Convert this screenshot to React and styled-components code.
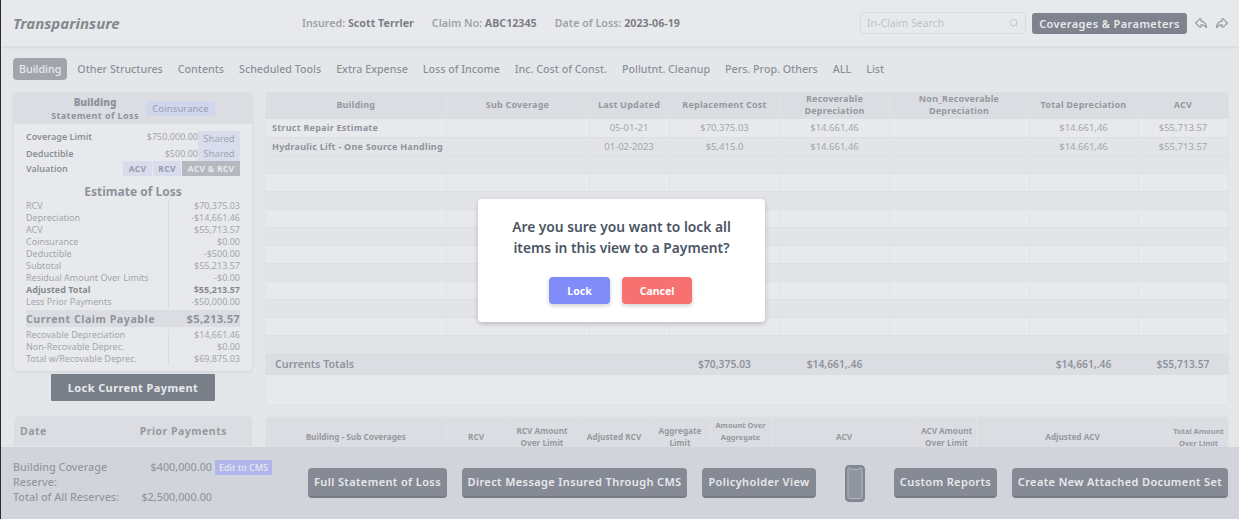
import styled, { createGlobalStyle } from "styled-components";
import { Search } from "lucide-react";
import { TiArrowBackOutline, TiArrowForwardOutline } from "react-icons/ti";

const GlobalStyle = createGlobalStyle`
	html, body {
		margin: 0;
		height: 100%;
		overflow: hidden;
		background: #2b2b2b;
	}
	* {
		box-sizing: border-box;
	}
	#root {
		height: 100%;
		padding-left: 1px;
		font-family: "Noto Sans", "Open Sans", sans-serif;
	}
`;

const Page = styled.div`
	position: relative;
	height: 519px;
	display: flex;
	flex-direction: column;
	background: #f7fbfb;
	overflow: hidden;
`;

const Header = styled.header`
	flex: none;
	height: 46px;
	display: flex;
	align-items: center;
	padding: 0 9px 0 12px;
	background: #ffffff;
	box-shadow: 0 1px 4px rgba(0, 0, 0, 0.14);
`;

const Logo = styled.div`
	width: 289px;
	font-size: 15px;
	font-weight: 700;
	font-style: italic;
	color: #343a44;
`;

const ClaimInfo = styled.div`
	flex: 1;
	display: flex;
	gap: 18px;
	font-size: 10.7px;
	font-weight: 600;
	color: #676d77;

	b {
		font-weight: 700;
		color: #1f2732;
	}
`;

const SearchBox = styled.div`
	width: 166px;
	height: 22px;
	display: flex;
	align-items: center;
	justify-content: space-between;
	padding: 0 6px;
	margin-right: 6px;
	border: 1px solid #dfe3e8;
	border-radius: 4px;
	font-size: 10.5px;
	color: #a8adb5;
`;

const DarkButton = styled.button`
	border: none;
	border-radius: 3px;
	background: #2d3343;
	color: #ffffff;
	font-family: inherit;
	font-size: 11px;
	font-weight: 600;
	letter-spacing: 0.4px;
	height: 21px;
	width: 155px;
	padding: 0;
`;

const HeaderIcons = styled.div`
	display: flex;
	gap: 5px;
	margin-left: 6px;
	color: #666c76;
	font-size: 16px;

	svg {
		display: block;
	}
`;

const Tabs = styled.nav`
	flex: none;
	display: flex;
	align-items: center;
	gap: 5px;
	height: 24px;
	margin: 11px 0 11px 12px;
`;

const Tab = styled.div`
	padding: 0 ${({ $active }) => ($active ? "6px" : "5px")};
	height: 22px;
	line-height: 22px;
	border-radius: 4px;
	font-size: 10.7px;
	font-weight: 500;
	color: ${({ $active }) => ($active ? "#ffffff" : "#434b57")};
	background: ${({ $active }) => ($active ? "#6f7783" : "transparent")};
`;

const Content = styled.main`
	flex: 1;
	min-height: 0;
	overflow: hidden;
	display: grid;
	grid-template-columns: 238px 962px;
	column-gap: 14px;
	padding: 0 0 0 13px;
	align-content: start;
`;

const Sidebar = styled.aside`
	display: flex;
	flex-direction: column;
	align-items: center;
`;

const Card = styled.section`
	width: 100%;
	height: 279px;
	background: #ffffff;
	border-radius: 5px;
	box-shadow: 0 1px 4px rgba(0, 0, 0, 0.16);
	overflow: hidden;
`;

const CardHeader = styled.div`
	height: 32px;
	display: flex;
	align-items: center;
	gap: 7px;
	padding-left: 37px;
	background: #e5e7eb;
`;

const CardTitle = styled.div`
	width: 88px;
	text-align: center;
	font-size: 9px;
	font-weight: 700;
	letter-spacing: 0.4px;
	line-height: 12px;
	color: #4a515b;
	white-space: nowrap;

	strong {
		display: block;
		font-size: 10px;
		letter-spacing: 0;
		line-height: 15px;
	}
`;

const Chip = styled.span`
	display: inline-block;
	width: 69px;
	height: 15px;
	line-height: 15px;
	text-align: center;
	border-radius: 2px;
	background: #cfd8ff;
	color: #5a6290;
	font-size: 9.5px;
	letter-spacing: 0.1px;
`;

const CardBody = styled.div`
	padding: 6px 12px 0 12px;
`;

const LimitRow = styled.div`
	height: ${({ $h }) => $h}px;
	display: flex;
	align-items: center;
	font-size: 9px;
	font-weight: 600;
	color: #3f4650;
`;

const LimitLabel = styled.span`
	flex: 1;
	padding-bottom: ${({ $up }) => ($up ? "3px" : "0")};
`;

const LimitValue = styled.span`
	font-weight: 400;
	color: #6f757d;
	font-size: 9px;
	padding-bottom: ${({ $up }) => ($up ? "3px" : "0")};
`;

const SharedChip = styled.span`
	width: 42px;
	height: 15px;
	line-height: 15px;
	text-align: center;
	background: #dfe4ff;
	color: #6f7590;
	font-size: 9.5px;
	font-weight: 400;
`;

const Segment = styled.span`
	width: ${({ $w }) => $w}px;
	height: 15px;
	line-height: 15px;
	text-align: center;
	margin-left: ${({ $first }) => ($first ? "0" : "1px")};
	background: ${({ $active }) => ($active ? "#999da3" : "#dfe4ff")};
	color: ${({ $active }) => ($active ? "#ffffff" : "#5c637c")};
	font-size: 8.5px;
	font-weight: 700;
	letter-spacing: 0.3px;
`;

const EstimateTitle = styled.div`
	margin-top: 7px;
	text-align: center;
	font-size: 12px;
	font-weight: 700;
	line-height: 17px;
	color: #4a515b;
`;

const StatementRow = styled.div`
	display: grid;
	grid-template-columns: 143px 1fr;
	height: 12px;
	line-height: 12px;
	font-size: 9px;
	color: ${({ $bold }) => ($bold ? "#393f45" : "#6f757d")};
	font-weight: ${({ $bold }) => ($bold ? 700 : 400)};

	span:first-child {
		border-right: 1px solid #e2e4e8;
	}
	span:last-child {
		text-align: right;
	}
`;

const PayableRow = styled.div`
	display: grid;
	grid-template-columns: 143px 1fr;
	height: 17px;
	line-height: 18px;
	margin: 2px 0;
	background: #e5e7eb;
	font-size: 10.7px;
	font-weight: 700;
	letter-spacing: 0.5px;
	color: #4a515b;
	white-space: nowrap;

	span:last-child {
		text-align: right;
		font-size: 11.3px;
		letter-spacing: 0.2px;
	}
`;

const LockButton = styled.button`
	width: 164px;
	height: 27px;
	margin-top: 3px;
	border: none;
	border-radius: 1px;
	background: #212b39;
	color: #ffffff;
	font-family: inherit;
	font-size: 11px;
	font-weight: 700;
	letter-spacing: 0.4px;
	padding: 0;
`;

const PriorHeader = styled.div`
	width: 100%;
	height: 30px;
	margin-top: 15px;
	display: flex;
	align-items: center;
	justify-content: space-between;
	padding: 0 25px 0 6px;
	border-radius: 5px 5px 0 0;
	background: #e5e7eb;
	font-size: 10.5px;
	font-weight: 700;
	letter-spacing: 0.5px;
	color: #575d65;
`;

const TablesColumn = styled.div`
	display: flex;
	flex-direction: column;
	gap: 12px;
`;

const TableCard = styled.div`
	height: ${({ $h }) => $h}px;
	flex: none;
	background: #ffffff;
	border-radius: 3px;
	box-shadow: 0 0 2px rgba(0, 0, 0, 0.12);
	overflow: hidden;
`;

const Table = styled.table`
	width: 100%;
	table-layout: fixed;
	border-collapse: collapse;
`;

const HeadCell = styled.th`
	height: ${({ $h }) => $h}px;
	padding: 0 0 ${({ $lift }) => ($lift ? "13px" : "1px")};
	background: #e5e7eb;
	border-right: 1px solid #f0f1f3;
	color: #575d65;
	font-size: ${({ $size }) => $size}px;
	line-height: 12px;
	font-weight: 700;
	letter-spacing: ${({ $spacing }) => $spacing}px;
`;

const Row = styled.tr`
	height: 18px;
	background: ${({ $alt }) => ($alt ? "#f3f5f7" : "#ffffff")};
	border-bottom: 1px solid #e8eaed;
`;

const Cell = styled.td`
	padding: 0;
	border-right: 1px solid #eef0f2;
	text-align: center;
	font-size: 9.5px;
	color: #6f757d;
`;

const NameCell = styled(Cell)`
	padding-left: 6px;
	text-align: left;
	font-size: 9px;
	font-weight: 700;
	letter-spacing: 0.25px;
	white-space: nowrap;
	color: #4a515b;
`;

const TotalRow = styled.tr`
	height: 22px;
	background: #e5e7eb;
`;

const TotalCell = styled.td`
	padding: 0 0 1px;
	text-align: center;
	font-size: 10.3px;
	font-weight: 600;
	color: #4a515b;
`;

const TotalLabel = styled(TotalCell)`
	padding-left: 9px;
	text-align: left;
	font-size: 10.7px;
`;

const Footer = styled.footer`
	flex: none;
	position: relative;
	height: 72px;
	display: flex;
	align-items: center;
	padding: 0 10px 0 12px;
	background: #d1d7dd;
`;

const Reserves = styled.div`
	width: 295px;
	flex: none;
	display: grid;
	grid-template-columns: 96px 103px 60px;
	grid-auto-rows: 15px;
	line-height: 15px;
	font-size: 10.8px;
	font-weight: 500;
	color: #535961;
	margin-top: -3px;
`;

const ReserveLabel = styled.div`
	grid-row: ${({ $row }) => $row};
	grid-column: ${({ $span }) => ($span ? "1 / 3" : "1")};
	white-space: nowrap;
`;

const ReserveValue = styled.div`
	grid-row: ${({ $row }) => $row};
	grid-column: 2;
	text-align: right;
`;

const EditChip = styled.span`
	grid-row: 1;
	grid-column: 3;
	width: 57px;
	height: 15px;
	margin: 1px 0 0 3px;
	text-align: center;
	background: #8f97ff;
	color: #ffffff;
	font-size: 9px;
	font-weight: 500;
`;

const FooterActions = styled.div`
	display: flex;
	align-items: center;
	gap: 15px;
`;

const FooterButton = styled.button`
	flex: none;
	width: ${({ $w }) => $w}px;
	height: 30px;
	padding: 0 0 2px;
	border: none;
	border-bottom: 2px solid #192333;
	border-radius: 4px;
	background: #39414f;
	color: #ffffff;
	font-family: inherit;
	font-size: 11px;
	font-weight: 600;
	letter-spacing: 0.38px;
	white-space: nowrap;
`;

const PhoneSlot = styled.div`
	flex: none;
	display: flex;
	margin: 0 14px;
`;

const Overlay = styled.div`
	position: absolute;
	inset: 0;
	display: flex;
	align-items: center;
	justify-content: center;
	padding: 2px 0 0 3px;
	background: rgba(209, 211, 217, 0.5);
`;

const Modal = styled.div`
	width: 287px;
	height: 123px;
	padding-top: 17px;
	background: #ffffff;
	border-radius: 4px;
	box-shadow: 0 2px 5px rgba(0, 0, 0, 0.2);
	text-align: center;
`;

const ModalText = styled.p`
	margin: 0 0 19px;
	font-size: 13.8px;
	line-height: 21px;
	font-weight: 600;
	color: #4b5563;
`;

const ModalActions = styled.div`
	display: flex;
	justify-content: center;
	gap: 12px;
	margin-right: 2px;
`;

const ModalButton = styled.button`
	width: ${({ $w }) => $w}px;
	height: 27px;
	padding: 0;
	border: none;
	border-radius: 4px;
	background: ${({ $color }) => $color};
	color: #ffffff;
	font-family: inherit;
	font-size: 10.5px;
	font-weight: 700;
	box-shadow: 0 2px 4px rgba(0, 0, 0, 0.18);
`;

const tabs = [
	"Building",
	"Other Structures",
	"Contents",
	"Scheduled Tools",
	"Extra Expense",
	"Loss of Income",
	"Inc. Cost of Const.",
	"Pollutnt. Cleanup",
	"Pers. Prop. Others",
	"ALL",
	"List",
];

const estimate = [
	["RCV", "$70,375.03"],
	["Depreciation", "-$14,661.46"],
	["ACV", "$55,713.57"],
	["Coinsurance", "$0.00"],
	["Deductible", "-$500.00"],
	["Subtotal", "$55,213.57"],
	["Residual Amount Over Limits", "-$0.00"],
	["Adjusted Total", "$55,213.57", true],
	["Less Prior Payments", "-$50,000.00"],
];

const recoverable = [
	["Recovable Depreciation", "$14,661.46"],
	["Non-Recovable Deprec.", "$0.00"],
	["Total w/Recovable Deprec.", "$69,875.03"],
];

const mainColumns = [180, 143, 80, 111, 109, 140, 109, 90];
const mainHeads = [
	"Building",
	"Sub Coverage",
	"Last Updated",
	"Replacement Cost",
	"Recoverable Depreciation",
	"Non_Recoverable Depreciation",
	"Total Depreciation",
	"ACV",
];
const mainRows = [
	["Struct Repair Estimate", "", "05-01-21", "$70,375.03", "$14.661,46", "", "$14.661,46", "$55,713.57"],
	["Hydraulic Lift - One Source Handling", "", "01-02-2023", "$5,415.0", "$14.661,46", "", "$14.661,46", "$55,713.57"],
	...Array.from({ length: 11 }, () => ["", "", "", "", "", "", "", ""]),
];

const subColumns = [180, 60, 72, 72, 60, 61, 146, 59, 193, 59];
const subHeads = [
	{ label: "Building - Sub Coverages" },
	{ label: "RCV" },
	{ label: "RCV Amount Over Limit" },
	{ label: "Adjusted RCV" },
	{ label: "Aggregate Limit" },
	{ label: "Amount Over Aggregate", small: true, lift: true },
	{ label: "ACV" },
	{ label: "ACV Amount Over Limit" },
	{ label: "Adjusted ACV" },
	{ label: "Total Amount Over Limit", small: true },
];

const PhoneIcon = () => (
	<svg width="20" height="37" viewBox="0 0 20 37" aria-hidden="true">
		<rect x="0.75" y="0.75" width="18.5" height="35.5" rx="3.5" fill="#39414f" stroke="#2d3545" strokeWidth="1.5" />
		<path d="M3 4.5 a1.5 1.5 0 0 1 1.5-1.5 h1 l1 1.5 h7 l1-1.5 h1 a1.5 1.5 0 0 1 1.5 1.5 v27.5 a1.5 1.5 0 0 1-1.5 1.5 h-11 a1.5 1.5 0 0 1-1.5-1.5 z" fill="#4f5866" stroke="#b5bac2" strokeWidth="0.7" />
	</svg>
);

const App = () => {
	return (
		<Page>
			<GlobalStyle />
			<Header>
				<Logo>Transparinsure</Logo>
				<ClaimInfo>
					<span>Insured: <b>Scott Terrler</b></span>
					<span>Claim No: <b>ABC12345</b></span>
					<span>Date of Loss: <b>2023-06-19</b></span>
				</ClaimInfo>
				<SearchBox>
					In-Claim Search
					<Search size={10} />
				</SearchBox>
				<DarkButton>Coverages &amp; Parameters</DarkButton>
				<HeaderIcons>
					<TiArrowBackOutline />
					<TiArrowForwardOutline />
				</HeaderIcons>
			</Header>

			<Tabs>
				{tabs.map((tab, i) => (
					<Tab key={tab} $active={i === 0}>{tab}</Tab>
				))}
			</Tabs>

			<Content>
				<Sidebar>
					<Card>
						<CardHeader>
							<CardTitle>
								<strong>Building</strong>
								Statement of Loss
							</CardTitle>
							<Chip>Coinsurance</Chip>
						</CardHeader>
						<CardBody>
							<LimitRow $h={16}>
								<LimitLabel $up>Coverage Limit</LimitLabel>
								<LimitValue $up>$750,000.00</LimitValue>
								<SharedChip>Shared</SharedChip>
							</LimitRow>
							<LimitRow $h={15}>
								<LimitLabel>Deductible</LimitLabel>
								<LimitValue>$500.00</LimitValue>
								<SharedChip>Shared</SharedChip>
							</LimitRow>
							<LimitRow $h={15}>
								<LimitLabel>Valuation</LimitLabel>
								<Segment $w={29} $first>ACV</Segment>
								<Segment $w={28}>RCV</Segment>
								<Segment $w={58} $active>ACV &amp; RCV</Segment>
							</LimitRow>
							<EstimateTitle>Estimate of Loss</EstimateTitle>
							{estimate.map(([label, value, bold]) => (
								<StatementRow key={label} $bold={bold}>
									<span>{label}</span>
									<span>{value}</span>
								</StatementRow>
							))}
							<PayableRow>
								<span>Current Claim Payable</span>
								<span>$5,213.57</span>
							</PayableRow>
							{recoverable.map(([label, value]) => (
								<StatementRow key={label}>
									<span>{label}</span>
									<span>{value}</span>
								</StatementRow>
							))}
						</CardBody>
					</Card>
					<LockButton>Lock Current Payment</LockButton>
					<PriorHeader>
						<span>Date</span>
						<span>Prior Payments</span>
					</PriorHeader>
				</Sidebar>

				<TablesColumn>
					<TableCard $h={313}>
						<Table>
							<colgroup>
								{mainColumns.map((w, i) => <col key={i} style={{ width: w }} />)}
							</colgroup>
							<thead>
								<tr>
									{mainHeads.map((head) => (
										<HeadCell key={head} $h={27} $size={9} $spacing={0.2}>{head}</HeadCell>
									))}
								</tr>
							</thead>
							<tbody>
								{mainRows.map((row, r) => (
									<Row key={r} $alt={r === 1 || (r > 1 && r % 2 === 0)}>
										{row.map((value, c) =>
											c === 0 ? (
												<NameCell key={c}>{value}</NameCell>
											) : (
												<Cell key={c}>{value}</Cell>
											)
										)}
									</Row>
								))}
								<TotalRow>
									<TotalLabel colSpan={3}>Currents Totals</TotalLabel>
									<TotalCell>$70,375.03</TotalCell>
									<TotalCell>$14,661,.46</TotalCell>
									<TotalCell />
									<TotalCell>$14,661,.46</TotalCell>
									<TotalCell>$55,713.57</TotalCell>
								</TotalRow>
							</tbody>
						</Table>
					</TableCard>
					<TableCard $h={60}>
						<Table>
							<colgroup>
								{subColumns.map((w, i) => <col key={i} style={{ width: w }} />)}
							</colgroup>
							<thead>
								<tr>
									{subHeads.map(({ label, small, lift }) => (
										<HeadCell key={label} $h={41} $lift={lift} $size={small ? 7.5 : 8.2} $spacing={0}>
											{label}
										</HeadCell>
									))}
								</tr>
							</thead>
						</Table>
					</TableCard>
				</TablesColumn>
			</Content>

			<Footer>
				<Reserves>
					<ReserveLabel $row={1}>Building Coverage</ReserveLabel>
					<ReserveValue $row={1}>$400,000.00</ReserveValue>
					<EditChip>Edit to CMS</EditChip>
					<ReserveLabel $row={2}>Reserve:</ReserveLabel>
					<ReserveLabel $row={3} $span>Total of All Reserves:</ReserveLabel>
					<ReserveValue $row={3}>$2,500,000.00</ReserveValue>
				</Reserves>
				<FooterActions>
					<FooterButton $w={139}>Full Statement of Loss</FooterButton>
					<FooterButton $w={225}>Direct Message Insured Through CMS</FooterButton>
					<FooterButton $w={114}>Policyholder View</FooterButton>
					<PhoneSlot><PhoneIcon /></PhoneSlot>
					<FooterButton $w={103}>Custom Reports</FooterButton>
					<FooterButton $w={216}>Create New Attached Document Set</FooterButton>
				</FooterActions>
			</Footer>

			<Overlay>
				<Modal>
					<ModalText>
						Are you sure you want to lock all
						<br />
						items in this view to a Payment?
					</ModalText>
					<ModalActions>
						<ModalButton $w={61} $color="#818cf8">Lock</ModalButton>
						<ModalButton $w={70} $color="#f87171">Cancel</ModalButton>
					</ModalActions>
				</Modal>
			</Overlay>
		</Page>
	);
};

export default App;
